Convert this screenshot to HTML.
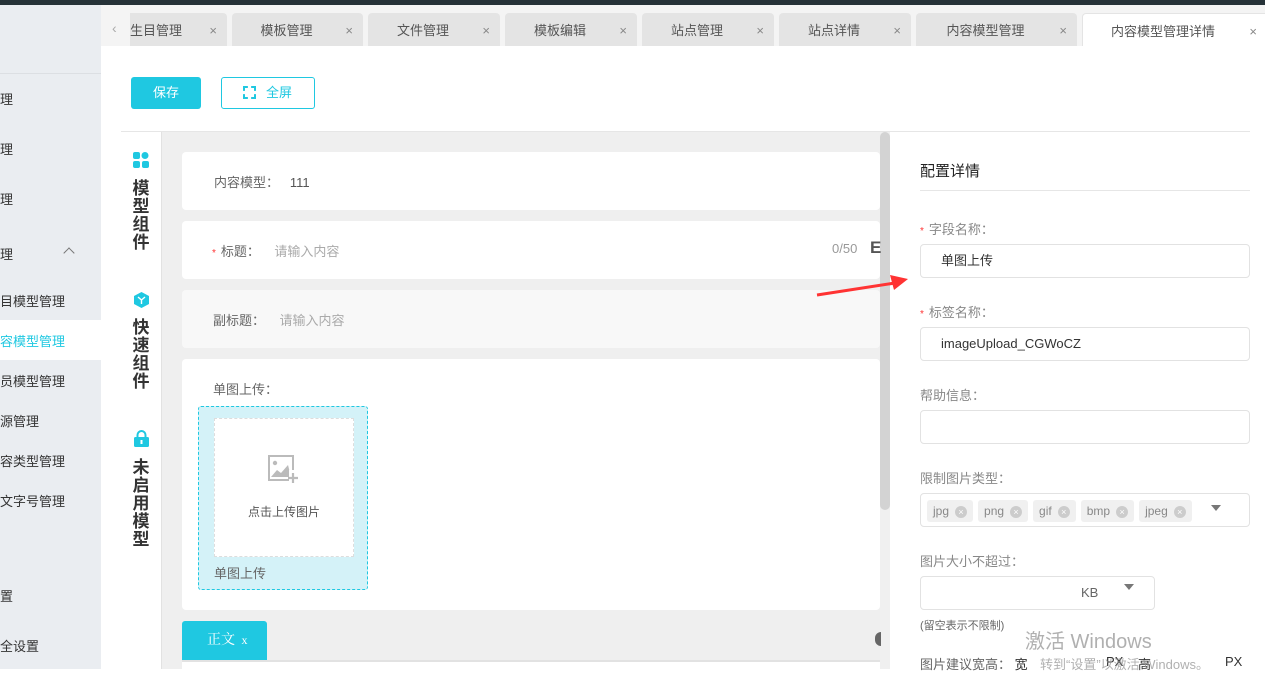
<!DOCTYPE html>
<html><head><meta charset="utf-8">
<style>
*{margin:0;padding:0;box-sizing:border-box}
body{width:1265px;height:669px;overflow:hidden;position:relative;background:#fff;font-family:"Liberation Sans","Noto Sans CJK SC",sans-serif;font-size:13px;color:#555}
.a{position:absolute}
.tab{position:absolute;top:13px;height:33px;background:#e4e4e4;border-radius:4px 4px 0 0;color:#555;font-size:13px;line-height:35px;text-align:center}
.tab .x{position:absolute;right:10px;top:0;color:#888;font-size:13px}
.side{position:absolute;left:0;font-size:13px;color:#333}
.card{position:absolute;left:182px;width:698px;background:#fff;border-radius:4px}
.lbl{position:absolute;left:920px;color:#888;font-size:13px}
.inp{position:absolute;left:920px;width:330px;height:34px;border:1px solid #e2e2e2;border-radius:4px;background:#fff;font-size:13px;color:#333;line-height:32px;padding-left:20px}
.star{color:#f33;font-size:10px;margin-right:5px}
.tag{display:inline-block;height:22px;line-height:22px;background:#f0f0f0;border-radius:3px;color:#888;font-size:12px;padding:0 6px;margin-right:5px;vertical-align:middle}
.tag i{display:inline-block;width:12px;height:12px;border-radius:50%;background:#ccc;color:#fff;font-style:normal;font-size:9px;line-height:12px;text-align:center;margin-left:6px;vertical-align:0px}
.vt{position:absolute;left:131px;width:20px;font-size:17px;font-weight:bold;color:#333;line-height:18px;text-align:center}
</style></head><body>
<div class="a" style="left:0;top:0;width:1265px;height:5px;background:#263238"></div>
<div class="a" style="left:0;top:5px;width:101px;height:664px;background:#eaedf1"></div>
<div class="a" style="left:0;top:73px;width:101px;height:1px;background:#dcdfe3"></div>
<div class="side" style="top:89px">理</div>
<div class="side" style="top:139px">理</div>
<div class="side" style="top:189px">理</div>
<div class="side" style="top:244px">理</div>
<div class="a" style="left:65px;top:249px;width:8px;height:8px;border-left:1px solid #777;border-top:1px solid #777;transform:rotate(45deg)"></div>
<div class="side" style="top:291px">目模型管理</div>
<div class="a" style="left:0;top:320px;width:101px;height:40px;background:#fff"></div>
<div class="side" style="top:331px;color:#1fc8e1">容模型管理</div>
<div class="side" style="top:371px">员模型管理</div>
<div class="side" style="top:411px">源管理</div>
<div class="side" style="top:451px">容类型管理</div>
<div class="side" style="top:491px">文字号管理</div>
<div class="side" style="top:586px">置</div>
<div class="side" style="top:636px">全设置</div>
<div class="a" style="left:101px;top:5px;width:1164px;height:41px;background:#f4f4f4"></div>
<div class="a" style="left:112px;top:20px;color:#aaa;font-size:14px">‹</div>
<div class="tab" style="left:130px;width:97px;border-radius:0 4px 0 0;text-align:left">生目管理<span class="x">×</span></div>
<div class="tab" style="left:232px;width:131px;padding-right:22px">模板管理<span class="x">×</span></div>
<div class="tab" style="left:368px;width:132px;padding-right:22px">文件管理<span class="x">×</span></div>
<div class="tab" style="left:505px;width:132px;padding-right:22px">模板编辑<span class="x">×</span></div>
<div class="tab" style="left:642px;width:132px;padding-right:22px">站点管理<span class="x">×</span></div>
<div class="tab" style="left:779px;width:132px;padding-right:22px">站点详情<span class="x">×</span></div>
<div class="tab" style="left:916px;width:161px;padding-right:22px">内容模型管理<span class="x">×</span></div>
<div class="tab" style="left:1082px;width:190px;background:#fff;border:1px solid #e4e4e4;border-bottom:none;padding-right:28px">内容模型管理详情<span class="x" style="right:14px">×</span></div>
<div class="a" style="left:131px;top:77px;width:70px;height:32px;background:#1fc8e1;border-radius:3px;color:#fff;text-align:center;line-height:32px;font-size:13px">保存</div>
<div class="a" style="left:221px;top:77px;width:94px;height:32px;border:1px solid #1fc8e1;border-radius:3px;color:#1fc8e1;line-height:30px;font-size:13px;padding-left:44px">全屏</div>
<div class="a" style="left:243px;top:86px;width:13px;height:13px;border:2px dashed #1fc8e1"></div>
<div class="a" style="left:121px;top:131px;width:1129px;height:1px;background:#e6e6e6"></div>
<div class="a" style="left:161px;top:132px;width:719px;height:537px;background:#efefef"></div>
<div class="a" style="left:161px;top:132px;width:1px;height:537px;background:#e2e2e2"></div>
<div class="a" style="left:880px;top:132px;width:10px;height:537px;background:#f0f0f0"></div>
<div class="a" style="left:880px;top:132px;width:10px;height:378px;background:#d3d3d3;border-radius:5px"></div>
<svg class="a" style="left:133px;top:152px" width="16" height="16"><rect x="0" y="0" width="7" height="7" rx="2" fill="#1fc8e1"/><circle cx="12" cy="3.5" r="3.5" fill="#1fc8e1"/><rect x="0" y="9" width="7" height="7" rx="2" fill="#1fc8e1"/><rect x="9" y="9" width="7" height="7" rx="2" fill="#1fc8e1"/></svg>
<div class="vt" style="top:180px">模型组件</div>
<svg class="a" style="left:134px;top:292px" width="15" height="16"><polygon points="7.5,0 15,4 15,12 7.5,16 0,12 0,4" fill="#1fc8e1"/><path d="M4 5 L7.5 8 L11 5 M7.5 8 V12" stroke="#fff" stroke-width="1.4" fill="none"/></svg>
<div class="vt" style="top:319px">快速组件</div>
<svg class="a" style="left:134px;top:430px" width="15" height="17"><path d="M3.5 8 V5 a4 4 0 0 1 8 0 V8" stroke="#1fc8e1" stroke-width="2" fill="none"/><rect x="0" y="7" width="15" height="10" rx="1.5" fill="#1fc8e1"/><rect x="6.5" y="10" width="2" height="4" fill="#fff"/></svg>
<div class="vt" style="top:459px">未启用模型</div>
<div class="card" style="top:152px;height:58px"><span class="a" style="left:32px;top:20px;color:#666">内容模型：&nbsp;&nbsp;&nbsp;<span style="color:#555">111</span></span></div>
<div class="card" style="top:221px;height:58px"><span class="a" style="left:30px;top:20px;color:#666"><span class="star">*</span>标题：&nbsp;&nbsp;&nbsp;&nbsp;<span style="color:#aaa">请输入内容</span></span><span class="a" style="left:650px;top:20px;color:#999">0/50</span><span class="a" style="left:688px;top:17px;color:#555;font-weight:bold;font-size:17px">E</span></div>
<div class="card" style="top:290px;height:58px;background:#f8f8f8"><span class="a" style="left:31px;top:20px;color:#666">副标题：&nbsp;&nbsp;&nbsp;&nbsp;<span style="color:#aaa">请输入内容</span></span></div>
<div class="card" style="top:359px;height:251px"><span class="a" style="left:31px;top:20px;color:#666">单图上传：</span>
<div class="a" style="left:16px;top:47px;width:170px;height:184px;background:#d4f2f8;border:1px dashed #1fc8e1;border-radius:3px">
<div class="a" style="left:15px;top:11px;width:140px;height:139px;background:#fff;border:1px dashed #ddd"></div>
<svg class="a" style="left:69px;top:48px" width="30" height="30"><rect x="1" y="1" width="24" height="24" fill="none" stroke="#bbb" stroke-width="2"/><circle cx="7" cy="8" r="2.2" fill="#bbb"/><path d="M3 22 L9 15 L13 18 L20 10 L22 18 L22 22 Z" fill="#bbb"/><rect x="21" y="15" width="8" height="14" fill="#fff"/><path d="M25 18 V28 M20 23 H30" stroke="#bbb" stroke-width="2.2"/></svg>
<div class="a" style="left:15px;top:96px;width:140px;text-align:center;font-size:12px;color:#555">点击上传图片</div>
<div class="a" style="left:15px;top:156px;color:#666;font-size:13px">单图上传</div>
</div></div>
<div class="a" style="left:182px;top:621px;width:85px;height:39px;background:#1fc8e1;border-radius:3px 3px 0 0;color:#fff;line-height:39px;padding-left:25px;font-family:'Liberation Serif','Noto Serif CJK SC',serif;font-size:14px">正文 <span style="font-size:12px;margin-left:3px">x</span></div>
<div class="a" style="left:182px;top:660px;width:698px;height:2px;background:#e2e2e2"></div>
<div class="a" style="left:182px;top:662px;width:698px;height:7px;background:#fff"></div>
<div class="a" style="left:875px;top:632px;width:6px;height:14px;border-radius:6px 0 0 6px;background:#666"></div>
<div class="a" style="left:920px;top:160px;font-size:15px;color:#222">配置详情</div>
<div class="a" style="left:920px;top:190px;width:330px;height:1px;background:#e6e6e6"></div>
<div class="lbl" style="top:219px"><span class="star">*</span>字段名称：</div>
<div class="inp" style="top:244px">单图上传</div>
<div class="lbl" style="top:302px"><span class="star">*</span>标签名称：</div>
<div class="inp" style="top:327px">imageUpload_CGWoCZ</div>
<div class="lbl" style="top:385px">帮助信息：</div>
<div class="inp" style="top:410px"></div>
<div class="lbl" style="top:468px">限制图片类型：</div>
<div class="inp" style="top:493px;padding-left:6px;line-height:32px"><span class="tag">jpg<i>×</i></span><span class="tag">png<i>×</i></span><span class="tag">gif<i>×</i></span><span class="tag">bmp<i>×</i></span><span class="tag">jpeg<i>×</i></span><span style="display:inline-block;margin-left:14px;border:5px solid transparent;border-top:6px solid #777;vertical-align:-2px"></span></div>
<div class="lbl" style="top:551px">图片大小不超过：</div>
<div class="inp" style="top:576px;width:235px;padding-left:160px;color:#666">KB<span style="display:inline-block;margin-left:26px;border:5px solid transparent;border-top:6px solid #777;vertical-align:2px"></span></div>
<div class="a" style="left:920px;top:617px;font-size:11px;color:#666">(留空表示不限制)</div>
<div class="lbl" style="top:654px;color:#666">图片建议宽高： <span style="color:#333">宽</span></div>
<div class="a" style="left:1106px;top:654px;color:#333">PX</div>
<div class="a" style="left:1138px;top:654px;color:#333">高</div>
<div class="a" style="left:1225px;top:654px;color:#333">PX</div>
<div class="a" style="left:1025px;top:625px;font-size:20px;color:rgba(150,150,150,.75)">激活 Windows</div>
<div class="a" style="left:1040px;top:654px;font-size:13px;color:rgba(150,150,150,.75)">转到“设置”以激活 Windows。</div>
<svg class="a" style="left:810px;top:265px" width="110" height="40"><path d="M7 30 L85 18" stroke="#f33" stroke-width="3"/><polygon points="80,10 98,14 84,25" fill="#f33"/></svg>
</body></html>
